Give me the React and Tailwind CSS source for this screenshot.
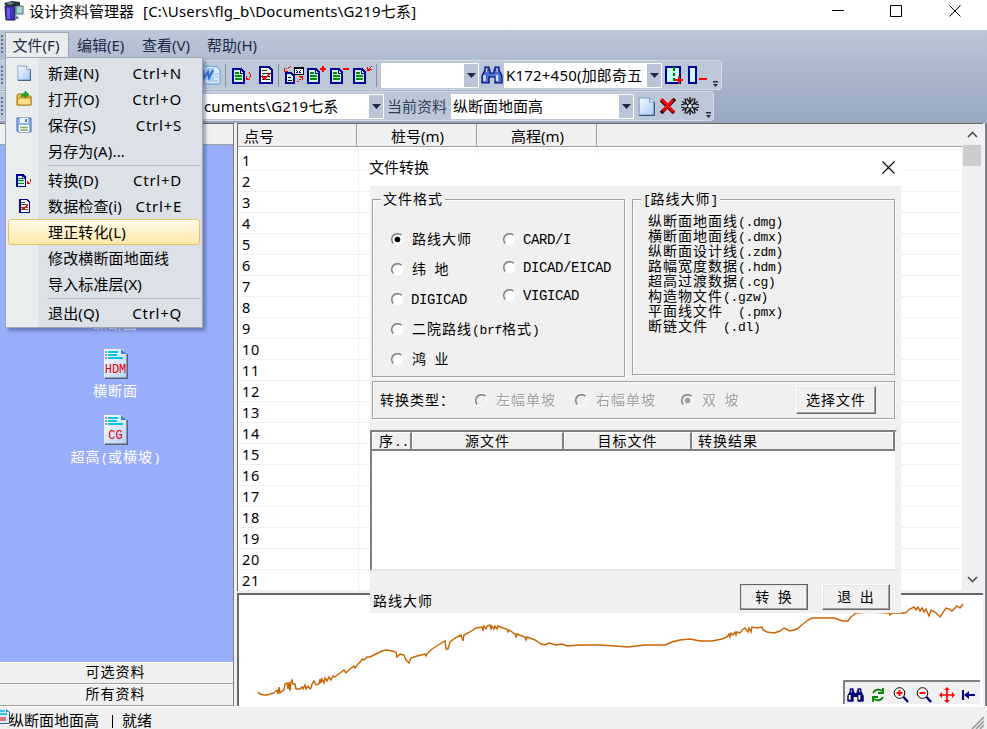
import React from "react";
import clsx from "clsx";

const UI = "font-['Noto_Sans','Noto_Sans_CJK_SC',sans-serif]";

const menuItems = [
    { label: "新建(N)", keys: "Ctrl+N", icon: "new" },
    { label: "打开(O)", keys: "Ctrl+O", icon: "open" },
    { label: "保存(S)", keys: "Ctrl+S", icon: "save" },
    { label: "另存为(A)..." },
    { divider: true },
    { label: "转换(D)", keys: "Ctrl+D", icon: "convert" },
    { label: "数据检查(i)", keys: "Ctrl+E", icon: "check" },
    { label: "理正转化(L)", active: true },
    { label: "修改横断面地面线" },
    { label: "导入标准层(X)" },
    { divider: true },
    { label: "退出(Q)", keys: "Ctrl+Q" },
];

const fileTypes = [
    "纵断面地面线(.dmg)",
    "横断面地面线(.dmx)",
    "纵断面设计线(.zdm)",
    "路幅宽度数据(.hdm)",
    "超高过渡数据(.cg)",
    "构造物文件(.gzw)",
    "平面线文件  (.pmx)",
    "断链文件  (.dl)",
];

const profile =
    "258,692 260,694 264,695 267,695 274,693 277,690 278,694 279,687 280,693 282,691 284,690 285,684 287,683 288,689 289,682 290,691 291,682 292,680 293,684 295,684 296,689 300,689 302,687 303,689 305,685 306,689 308,686 310,689 311,688 312,684 314,681 316,685 319,684 320,679 321,683 322,679 324,683 325,678 327,681 329,677 331,680 333,676 335,677 340,673 344,670 346,673 350,669 354,666 355,668 358,664 361,661 362,659 364,660 367,657 370,657 378,653 382,651 386,650 392,651 396,652 397,657 400,654 404,655 406,660 409,663 411,658 417,656 425,654 426,656 427,654 432,649 440,644 445,641 446,649 448,649 450,642 455,638 461,635 463,641 464,635 470,632 476,628 482,627 483,630 484,626 486,629 487,626 490,625 491,629 492,626 494,629 495,626 497,629 498,626 503,628 507,629 508,632 509,630 515,634 516,637 517,634 525,637 526,640 527,637 535,640 541,644 545,645 549,643 556,645 562,644 567,646 580,645 600,645 615,646 628,647 644,645 665,645 672,642 680,640 690,639 700,641 712,641 722,639 727,637 729,634 730,637 731,633 733,635 735,632 736,635 737,632 740,633 742,630 745,628 748,632 749,628 751,632 752,627 757,628 762,627 763,630 767,632 774,633 780,631 784,628 790,631 797,629 803,624 808,620 812,618 834,618 843,621 848,621 851,617 856,613 870,612 889,613 890,615 892,613 905,613 910,609 914,607 916,610 918,607 920,611 922,608 924,612 926,609 929,616 931,610 935,612 940,617 946,608 949,609 952,611 957,606 960,608 963,604";

// Page with a folded corner, used by New and by the toolbar
function PageIcon({ className }) {
    return (
        <svg className={className} viewBox="0 0 16 18">
            <defs>
                <linearGradient id="page" x1="0" y1="0" x2="1" y2="1">
                    <stop offset="0" stopColor="#f8fcff" />
                    <stop offset="1" stopColor="#a9c8f4" />
                </linearGradient>
            </defs>
            <path d="M1 1h10l4 4v12H1z" fill="url(#page)" stroke="#7d9bcb" />
            <path d="M11 1v4h4" fill="#eaf3ff" stroke="#7d9bcb" />
            <path d="M15.5 5v12.5H1" fill="none" stroke="#33527f" />
        </svg>
    );
}

// Small navy document with an optional red mark beside it
function DocIcon({ mark, className = "w-5 h-5" }) {
    return (
        <svg className={className} viewBox="0 0 20 20" shapeRendering="crispEdges">
            {mark !== "swap" && (
                <>
                    <path d="M1 4h8l3 3v11H1z" fill="#d4f6f0" stroke="#000094" strokeWidth="2" />
                    <path d="M8 4v4h4" fill="none" stroke="#000094" />
                    <path d="M3 8h4M3 11h7M3 14h7" stroke="#009000" strokeWidth="1.600" />
                </>
            )}
            {mark === "plus" && <path d="M15 1h2v6h-2zM13 3h6v2h-6z" fill="#f00" />}
            {mark === "minus" && <path d="M13 3h6v2h-6z" fill="#f00" />}
            {mark === "arrow" && <path d="M17 7h1v2h1v3h-1v1h-1v-1h1V9h-1zM14 11h1v2h1v1h2v1h-4z" fill="#f00" />}
            {mark === "up" && <path d="M18 1h1v1h-1zM17 2h1v1h-1zM16 3h1v1h2v1h-2v1h-3V2h1v2h1z" fill="#f00" />}
            {mark === "swap" && (
                <>
                    <path d="M10 2h9v7h-9z" fill="#fff" stroke="#000" />
                    <path d="M10 2h9v2h-9z" fill="#000" />
                    <path d="M12 5l2 2-2 1M17 5l-2 2 2 1" stroke="#0000a0" fill="none" />
                    <path d="M2 8h5l3 3v7H2z" fill="#d4f6f0" stroke="#000094" strokeWidth="2" />
                    <path d="M4 12h3M4 15h4" stroke="#000" />
                    <path d="M0 3h1v3h3v1H0zM2 3h1v1H2zM4 2h2v1H4zM6 1h1v1H6z" fill="#f00" />
                    <path d="M15 11h4v4h-1v-2h-2v-1h-1zM15 14h2v1h-2zM13 16h2v1h-2z" fill="#f00" />
                </>
            )}
        </svg>
    );
}

function CheckDocIcon({ className = "w-4 h-5" }) {
    return (
        <svg className={className} viewBox="0 0 16 20" shapeRendering="crispEdges">
            <path d="M2 2h9l3 3v13H2z" fill="#fff" stroke="#000094" strokeWidth="2" />
            <path d="M4 5.5h5M4 8.5h8M4 11.5h8M4 14.5h8" stroke="#222" />
            <path d="M4 11l3 3 5-6" fill="none" stroke="#f00" strokeWidth="1.600" />
        </svg>
    );
}

function FolderIcon() {
    return (
        <svg className="w-4 h-4" viewBox="0 0 16 16">
            <path d="M1 5l1-2h4l1 2h8v9H1z" fill="#f4c14d" stroke="#a97412" />
            <path d="M1 14l1-7h13v7z" fill="#ffdf86" stroke="#b07e1c" />
            <path d="M5 6c0-3 2-4 4-4V0l4 3.5L9 7V5C7 5 6 5 5 6z" fill="#2fa52f" stroke="#0c7a12" strokeWidth=".6" />
        </svg>
    );
}

function SaveIcon() {
    return (
        <svg className="w-4 h-4" viewBox="0 0 16 16">
            <path d="M1 1h14v14H2l-1-1z" fill="#8fb6e8" stroke="#3f6fb0" />
            <path d="M4 1h8v5H4z" fill="#f2f7ff" />
            <path d="M9 2h2v3H9z" fill="#4a78b8" />
            <path d="M3 8h10v7H3z" fill="#fff" />
            <path d="M4 10.5h8M4 13h8" stroke="#7fb060" strokeWidth="1.5" />
        </svg>
    );
}

function Binoculars({ className, body = "#4a72d8", lens = "#cfe0ff" }) {
    return (
        <svg className={className} viewBox="0 0 22 20">
            <path
                d="M4 2h4v3h1v3h4V5h1V2h4v3l3 6v7h-7v-6H8v6H1v-7l3-6z"
                fill={body}
                stroke="#00006c"
                strokeWidth="1.2"
            />
            <path d="M3.500 10v6M16 10v6" stroke={lens} strokeWidth="2.500" />
            <path d="M5.5 3v4M16 3v4" stroke={lens} />
        </svg>
    );
}

function WordIcon() {
    return (
        <svg className="w-5 h-5" viewBox="0 0 20 20">
            <path d="M1 2q9-2 15 0l3 3v14H4z" fill="#d6e8fa" stroke="#5c9bdc" />
            <path d="M0 3h13v12H0z" fill="#a9cdf2" />
            <path d="M2 5l1 8 4-6 1 6 4-8" fill="none" stroke="#2f6fc2" strokeWidth="2" />
            <path d="M14 9h3M14 12h3M8 16h9" stroke="#8ab8e6" />
        </svg>
    );
}

function Snowflake() {
    return (
        <svg className="w-5 h-5" viewBox="0 0 20 20">
            <g stroke="#111" strokeWidth="1.3" fill="none">
                <path d="M10 1v18M2 5.5l16 9M18 5.5l-16 9" />
                <path d="M6.500 2.500l3.500 4 3.500-4M6.500 17.500l3.500-4 3.500 4M1 9l5-1.500-1-5M19 9l-5-1.500 1-5M1 11l5 1.500-1 5M19 11l-5 1.500 1 5" />
            </g>
            <circle cx="10" cy="10" r="2.4" fill="#dff" stroke="#111" />
        </svg>
    );
}

function SectionIcon({ text }) {
    return (
        <svg className="w-6 h-8" viewBox="0 0 24 32">
            <defs>
                <linearGradient id="sheet" x1="0" y1="0" x2="1" y2="1">
                    <stop offset="0" stopColor="#fff" />
                    <stop offset="1" stopColor="#b4d0f6" />
                </linearGradient>
            </defs>
            <path d="M0 1h18l5 5v24H0z" fill="url(#sheet)" />
            <path d="M23.200 6v24.200H1" fill="none" stroke="#55606e" strokeWidth="1.500" />
            <path d="M17 1v5h6z" fill="#3d86c8" />
            <path d="M4 4h10M4 7h9M4 10h15" stroke="#00c4e8" strokeWidth="2" />
            <path d="M2 3v8" stroke="#1442a8" strokeDasharray="2 1" />
            <text x="11.500" y="25" fontSize="12" textAnchor="middle" fill="#e00000" fontFamily="Liberation Mono, monospace">
                {text}
            </text>
        </svg>
    );
}

function AppIcon() {
    return (
        <svg className="w-[21px] h-[21px]" viewBox="0 0 21 21">
            <path d="M1 6h10v14H2z" fill="#3f35b8" stroke="#20184f" />
            <path d="M3 8h3v11H3z" fill="#665be0" />
            <path d="M0 3l8-2 8 1v5l-5-1H2z" fill="#263238" />
            <path d="M2 3l5-1 3 1-4 2z" fill="#6f8fa0" />
            <path d="M12 6h7v8h-7z" fill="#a9d6d4" stroke="#3d6d6e" />
            <path d="M13 15l2 4h-4z" fill="#4d8d8a" />
        </svg>
    );
}

const menuIcons = {
    new: <PageIcon className="w-3.5 h-4" />,
    open: <FolderIcon />,
    save: <SaveIcon />,
    convert: <DocIcon mark="arrow" className="w-4 h-4" />,
    check: <CheckDocIcon className="w-[13px] h-4" />,
};

// SimSun-like text: CJK glyphs in 15px cells, half-width glyphs on a fixed pitch
function Sim({ children, wide, className }) {
    return (
        <span
            className={clsx(
                "block whitespace-pre font-['Noto_Sans_CJK_SC',sans-serif] text-[14px] tracking-[1px] leading-[15px]",
                className
            )}
        >
            {children.split(/([ -~]+)/).map((part, i) =>
                i % 2 ? (
                    <span
                        key={i}
                        className={clsx(
                            "font-['Liberation_Mono',monospace] leading-[0]",
                            wide ? "text-[14px] tracking-[-0.4px]" : "text-[13px] tracking-[-0.3px]"
                        )}
                    >
                        {part}
                    </span>
                ) : (
                    part
                )
            )}
        </span>
    );
}

function Radio({ checked, disabled }) {
    return (
        <svg className="w-[13px] h-[13px] shrink-0 mt-px" viewBox="0 0 13 13">
            <circle cx="6.500" cy="6.500" r="5.500" fill={disabled ? "#f0f0f0" : "#fff"} stroke="#fff" />
            <path d="M2.300 10.500A5.800 5.800 0 0 1 10.500 2.300" fill="none" stroke="#808080" strokeWidth="1.500" />
            {checked && <circle cx="6.500" cy="6.500" r="2.800" fill={disabled ? "#a0a0a0" : "#000"} />}
        </svg>
    );
}

function Option({ label, checked, disabled, className }) {
    return (
        <label className={clsx("flex items-center gap-2", className)}>
            <Radio checked={checked} disabled={disabled} />
            <Sim
                wide={/^[A-Z]/.test(label)}
                className={clsx(
                    /^[A-Z]/.test(label) && "-ml-px",
                    disabled && "text-[#a0a0a0] [text-shadow:1px_1px_0_#fff]"
                )}
            >
                {label}
            </Sim>
        </label>
    );
}

function PushButton({ children, primary, className }) {
    return (
        <button
            className={clsx(
                "flex items-center justify-center pb-0.5 bg-[#f0f0f0] border border-t-white border-l-white border-r-[#696969] border-b-[#696969] shadow-[inset_-1px_-1px_0_#a0a0a0,inset_1px_1px_0_#e3e3e3]",
                primary && "outline outline-1 -outline-offset-1 outline-[#646464]",
                className
            )}
        >
            <Sim>{children}</Sim>
        </button>
    );
}

function Combo({ text, className }) {
    return (
        <div className={clsx("flex items-center bg-white h-[25px] shrink-0", className)}>
            <span className="flex-1 pl-[2px] overflow-hidden whitespace-nowrap text-black">{text}</span>
            <span className="w-[14px] h-[23px] mr-px bg-[#b9c5d7] flex items-center justify-center">
                <svg className="w-[9px] h-[5px]" viewBox="0 0 9 5">
                    <path d="M0 0h9L4.500 5z" fill="#1b2a45" />
                </svg>
            </span>
        </div>
    );
}

function Grip() {
    return <div className="w-0.5 h-[19px] ml-px shrink-0 bg-[repeating-linear-gradient(to_bottom,#66758f_0_2px,transparent_2px_4px)]" />;
}

function Sep() {
    return <div className="w-px h-[23px] bg-[#8592a9] shrink-0" />;
}

function Overflow() {
    return (
        <svg className="w-[7px] h-[7px] self-end mb-[1px] shrink-0" viewBox="0 0 7 7">
            <path d="M1 0h5v1.500H1z" fill="#1b2a45" />
            <path d="M1 3h5L3.500 6z" fill="#1b2a45" />
        </svg>
    );
}

function TitleBar() {
    return (
        <div className="h-[30px] bg-white flex items-start pl-1 shrink-0">
            <AppIcon />
            <span className="ml-1 text-[15px] leading-[23px] whitespace-pre text-black">
                设计资料管理器<span className="ml-[9px] tracking-[0.18px]">[C:\Users\flg_b\Documents\G219七系]</span>
            </span>
            <svg className="ml-auto mr-[25px] mt-[3px] w-[130px] h-[15px]" viewBox="0 0 130 15" fill="none" stroke="#000">
                <path d="M0 7.500h12M58.500 2.500h11v11h-11zM117.500 2.500l11 11M128.500 2.500l-11 11" />
            </svg>
        </div>
    );
}

function MenuBar() {
    return (
        <div className="h-[29px] flex items-end shrink-0 bg-gradient-to-b from-[#bdc7d9] to-[#afbbcf] text-[15px] text-[#1b2a45]">
            <div className="self-center">
                <Grip />
            </div>
            <div className="ml-0.5 w-[64px] h-[27px] border border-b-0 border-[#9ba7b7] bg-[#e9ecee] flex items-center justify-center leading-[24px] pb-0.5 pr-0.5">
                文件(F)
            </div>
            {["编辑(E)", "查看(V)", "帮助(H)"].map((m) => (
                <span key={m} className="h-[27px] leading-[26px] ml-2 mr-[9px] w-[48px] whitespace-nowrap">
                    {m}
                </span>
            ))}
        </div>
    );
}

function Toolbars() {
    return (
        <div className="h-[64px] shrink-0 bg-gradient-to-b from-[#afbbcf] to-[#98a7c1] text-[15px] flex flex-col">
            <div className="w-[722px] h-[30px] mt-px flex items-center rounded-r bg-[#bcc7d8] border border-l-0 border-[#d2dae6]">
                <Grip />
                <div className="ml-[198px] flex items-center">
                    <WordIcon />
                    <div className="ml-1 flex items-center gap-[6px]">
                        <Sep />
                        <DocIcon mark="arrow" />
                        <CheckDocIcon />
                    </div>
                    <div className="ml-1 flex items-center gap-[5px]">
                        <Sep />
                        <DocIcon mark="swap" />
                    </div>
                    <div className="ml-[3px] flex items-center gap-[3px]">
                        <DocIcon mark="plus" />
                        <DocIcon mark="minus" />
                        <DocIcon mark="up" />
                        <Sep />
                    </div>
                </div>
                <Combo className="ml-[4px] w-[98px]" />
                <Binoculars className="w-[22px] h-5 ml-0.5 shrink-0" />
                <Combo text="K172+450(加郎奇五" className="ml-px w-[158px] tracking-[0.2px]" />
                <svg className="w-[43px] h-5 ml-[3px] shrink-0" viewBox="0 0 43 20" shapeRendering="crispEdges">
                    <path d="M1 2h14v16H1zM24 2h7v16h-7z" fill="#c8fbf8" stroke="#000094" strokeWidth="2" />
                    <path d="M8 2h2v4H8zM8 8h2v3H8zM8 13h2v3H8z" fill="#008000" />
                    <path d="M31 1v17" stroke="#000094" strokeDasharray="2 2" />
                    <path d="M10 14h8v2h-8zM13 11h2v8h-2zM34 13h8v2h-8z" fill="#f00" />
                </svg>
                <div className="ml-[4px] self-stretch flex">
                    <Overflow />
                </div>
            </div>
            <div className="w-[714px] h-[30px] mt-px flex items-center rounded-r bg-[#bcc7d8] border border-l-0 border-[#d2dae6] text-[#33415a]">
                <Grip />
                {/* the first part of the path is scrolled out under the menu */}
                <div className="ml-[199px] w-[182px] h-[25px] shrink-0 flex">
                    <Combo text="cuments\G219七系" className="w-[182px] tracking-[0.1px]" />
                </div>
                <span className="ml-[3px] w-[64px] shrink-0 whitespace-nowrap">当前资料</span>
                <Combo text="纵断面地面高" className="w-[183px]" />
                <PageIcon className="w-[17px] h-[19px] ml-1 shrink-0" />
                <svg className="w-[18px] h-[18px] ml-[4px] shrink-0" viewBox="0 0 18 18">
                    <path d="M2 3l13 13M16 2L2 16" stroke="#200" strokeWidth="3.500" />
                    <path d="M2.500 2l12 13M14 3L4 14" stroke="#f00" strokeWidth="3" />
                </svg>
                <span className="ml-[3px] shrink-0">
                    <Snowflake />
                </span>
                <div className="ml-[5px] self-stretch flex">
                    <Overflow />
                </div>
            </div>
        </div>
    );
}

function FileMenu() {
    return (
        <div className="absolute left-[5px] top-[57px] w-[198px] h-[271px] border border-[#9ba7b7] bg-[linear-gradient(to_right,#e9edee_32px,#dce1e8_32px)] shadow-[3px_3px_3px_rgba(40,55,100,0.4)] pt-0.5 text-[15px] text-black">
            {menuItems.map((item, i) =>
                item.divider ? (
                    <div key={i} className="h-[3px] ml-[41px] mr-px flex items-center">
                        <div className="h-px w-full bg-[#b9c0cb]" />
                    </div>
                ) : (
                    <div
                        key={i}
                        className={clsx(
                            "h-[26px] ml-0.5 mr-0.5 flex items-center rounded-[3px] border",
                            item.active
                                ? "border-[#e5c365] bg-gradient-to-b from-[#fffaea] to-[#ffe8a8]"
                                : "border-transparent"
                        )}
                    >
                        <span className="w-[30px] flex justify-center">{menuIcons[item.icon]}</span>
                        <span className="ml-[9px] whitespace-nowrap tracking-[0.15px]">{item.label}</span>
                        <span className="ml-auto mr-[17px] tracking-[0.75px]">{item.keys}</span>
                    </div>
                )
            )}
        </div>
    );
}

function Sidebar() {
    return (
        <div className="w-[234px] shrink-0 flex flex-col border-t border-r border-[#808080] border-t-[#696969] bg-[#99aefa]">
            <div className="h-[21px] bg-[#f0f0f0] border-b border-[#a0a0a0]" />
            <div className="flex-1 flex flex-col items-center pt-[171px] pr-[2px] text-white">
                <Sim>纵断面</Sim>
                <div className="mt-[17px]">
                    <SectionIcon text="HDM" />
                </div>
                <Sim className="mt-[3px]">横断面</Sim>
                <div className="mt-[16px]">
                    <SectionIcon text="CG" />
                </div>
                <Sim className="mt-[3px]">超高(或横坡)</Sim>
            </div>
            {["可选资料", "所有资料"].map((t) => (
                <div
                    key={t}
                    className="h-[22px] bg-[#f0f0f0] border-t border-b border-t-white border-b-[#a0a0a0] flex items-center justify-center pr-[2px] pb-1"
                >
                    <Sim>{t}</Sim>
                </div>
            ))}
        </div>
    );
}

function PointTable() {
    return (
        <div className="h-[468px] flex border-t border-l border-[#696969] bg-white">
            <div className="w-[724px] flex flex-col overflow-hidden">
                <div className="h-[23px] shrink-0 flex bg-[#f0f0f0] border-b border-[#a0a0a0] text-[15px] leading-[24px]">
                    <div className="w-[119px] pl-[6px] border-r border-[#a0a0a0]">点号</div>
                    <div className="w-[120px] pl-0.5 text-center border-r border-[#a0a0a0]">桩号(m)</div>
                    <div className="w-[120px] pl-0.5 text-center border-r border-[#a0a0a0]">高程(m)</div>
                </div>
                <div className="h-[3px] shrink-0 flex border-b border-[#f0f0f0]">
                    <div className="w-[121px] border-r border-[#f0f0f0]" />
                    <div className="w-[120px] border-r border-[#f0f0f0]" />
                    <div className="w-[120px] border-r border-[#f0f0f0]" />
                </div>
                {Array.from({ length: 21 }, (_, i) => (
                    <div
                        key={i}
                        className="h-[21px] shrink-0 flex border-b border-[#f0f0f0] text-[14.5px] leading-[20px] tracking-[0.6px]"
                    >
                        <div className="w-[121px] pl-1 border-r border-[#f0f0f0]">{i + 1}</div>
                        <div className="w-[120px] border-r border-[#f0f0f0]" />
                        <div className="w-[120px] border-r border-[#f0f0f0]" />
                    </div>
                ))}
            </div>
            <div className="w-[21px] bg-[#f0f0f0] flex flex-col items-center justify-between pt-[7px] pb-[8px] pr-px">
                <div className="flex flex-col items-center gap-[7px] w-full">
                    <svg className="w-[11px] h-[7px]" viewBox="0 0 11 7">
                        <path d="M1 6l4.500-4.500L10 6" fill="none" stroke="#505050" strokeWidth="1.700" />
                    </svg>
                    <div className="w-[18px] h-[21px] bg-[#cdcdcd]" />
                </div>
                <svg className="w-[11px] h-[7px]" viewBox="0 0 11 7">
                    <path d="M1 1l4.500 4.500L10 1" fill="none" stroke="#505050" strokeWidth="1.700" />
                </svg>
            </div>
        </div>
    );
}

function ChartTools() {
    return (
        <div className="absolute right-[3px] bottom-[2px] w-[137px] h-[24px] bg-[#f0f0f0] border-t-2 border-l-2 border-[#808080] flex items-center pl-[2px] pt-1 gap-[5px]">
            <Binoculars className="w-[17px] h-[16px]" body="#000080" lens="#ffffb0" />
            <svg className="w-[18px] h-[16px]" viewBox="0 0 18 16" fill="none" stroke="#008000" strokeWidth="1.800">
                <path d="M4 6c2-4 6-4 9-2M14 1v5H9M14 10c-2 4-6 4-9 2M4 15v-5h5" />
            </svg>
            {["in", "out"].map((z) => (
                <svg key={z} className="w-[18px] h-[16px]" viewBox="0 0 18 16">
                    <circle cx="7.500" cy="6" r="5.300" fill="#fff" stroke="#000" />
                    <path d={z === "in" ? "M4.500 6h6M7.500 3v6" : "M4.500 6h6"} stroke="#f00" strokeWidth="2" />
                    <path d="M11.500 10l4.500 5" stroke="#000080" strokeWidth="2.500" />
                </svg>
            ))}
            <svg className="w-[18px] h-[16px]" viewBox="0 0 18 16">
                <path d="M9 1v14M2 8h14" stroke="#f00" strokeWidth="1.700" />
                <path d="M9 0l3 3H6zM9 16l3-3H6zM1 8l3-3v6zM17 8l-3-3v6z" fill="#f00" />
            </svg>
            <svg className="w-[15px] h-[16px]" viewBox="0 0 15 16">
                <path d="M2 3v10M6 8h8" stroke="#000080" strokeWidth="2" />
                <path d="M3 8l5-4v8z" fill="#000080" />
            </svg>
        </div>
    );
}

function ProfileChart() {
    return (
        <div className="relative flex-1 bg-white border-t-2 border-l-2 border-[#696969]">
            <svg className="block w-[744px] h-[111px]" viewBox="239 595 744 111">
                <polyline points={profile} fill="none" stroke="#c86400" strokeWidth="1.400" />
            </svg>
            <ChartTools />
        </div>
    );
}

function Group({ title, className, children }) {
    return (
        <div
            role="group"
            className={clsx("relative border border-[#a0a0a0] shadow-[1px_1px_0_#fff,inset_1px_1px_0_#fff]", className)}
        >
            {title && (
                <span className="absolute left-[8px] -top-[11px] bg-[#f0f0f0] px-[2px] h-[18px] flex items-center">
                    <Sim>{title}</Sim>
                </span>
            )}
            {children}
        </div>
    );
}

function ConvertDialog() {
    return (
        <div className="absolute left-[370px] top-[153px] w-[531px] h-[460px] bg-[#f0f0f0] flex flex-col text-black">
            <div className="h-[33px] bg-white flex items-center justify-between pr-[6px] text-[15px] leading-[28px] shrink-0">
                <span className="-mt-[5px] -ml-px">文件转换</span>
                <svg className="w-[13px] h-[13px] -mt-[5px]" viewBox="0 0 13 13">
                    <path d="M.5.500l12 12M12.500.500l-12 12" stroke="#000" strokeWidth="1.100" />
                </svg>
            </div>
            <div className="flex items-start pl-[2px] pt-[13px] gap-[7px]">
                <Group title="文件格式" className="w-[253px] h-[178px]">
                    <div className="flex pl-[18px] pt-[31px]">
                        <div className="w-[112px] flex flex-col gap-[15px] whitespace-nowrap">
                            <Option label="路线大师" checked />
                            <Option label="纬 地" />
                            <Option label="DIGICAD" />
                            <Option label="二院路线(brf格式)" />
                            <Option label="鸿 业" />
                        </div>
                        <div className="flex flex-col gap-[13px]">
                            <Option label="CARD/I" />
                            <Option label="DICAD/EICAD" />
                            <Option label="VIGICAD" />
                        </div>
                    </div>
                </Group>
                <Group title="[路线大师]" className="w-[263px] h-[176px]">
                    <div className="flex flex-col pl-[15px] pt-[13px]">
                        {fileTypes.map((t) => (
                            <Sim key={t}>{t}</Sim>
                        ))}
                    </div>
                </Group>
            </div>
            <Group className="ml-[2px] mt-1 w-[523px] h-[38px] shrink-0 flex items-center">
                <Sim className="ml-[7px] -mt-0.5">转换类型：</Sim>
                <Option label="左幅单坡" disabled className="ml-[20px] -mt-px" />
                <Option label="右幅单坡" disabled className="ml-[19px] -mt-px" />
                <Option label="双 坡" disabled checked className="ml-[25px] -mt-px" />
                <PushButton className="ml-auto mr-[18px] w-[80px] h-[28px]">选择文件</PushButton>
            </Group>
            <div className="mt-[11px] w-[527px] h-[141px] shrink-0 bg-white border-2 border-t-[#808080] border-l-[#808080] border-r-[#f0f0f0] border-b-[#e3e3e3]">
                <div className="flex h-[19px] bg-[#f0f0f0] border-b-2 border-r-2 border-[#808080] [&>div]:flex [&>div]:items-center [&>div]:pb-px [&>div]:border-l [&>div]:border-t [&>div]:border-l-white [&>div]:border-t-white">
                    <div className="w-[40px] pl-[6px] border-r-2 border-r-[#808080]">
                        <Sim>序..</Sim>
                    </div>
                    <div className="w-[152px] justify-center border-r-2 border-r-[#808080]">
                        <Sim>源文件</Sim>
                    </div>
                    <div className="w-[128px] justify-center border-r-2 border-r-[#808080]">
                        <Sim>目标文件</Sim>
                    </div>
                    <div className="flex-1 pl-[5px]">
                        <Sim>转换结果</Sim>
                    </div>
                </div>
            </div>
            <div className="flex pl-[3px] pt-[13px]">
                <Sim className="mt-[9px]">路线大师</Sim>
                <PushButton primary className="ml-auto w-[68px] h-[26px]">
                    转 换
                </PushButton>
                <PushButton className="ml-[14px] mr-[11px] w-[68px] h-[26px]">退 出</PushButton>
            </div>
        </div>
    );
}

function StatusBar() {
    return (
        <div className="h-[23px] shrink-0 bg-[#f0f0f0] border-t border-white flex items-center text-[15px] text-black">
            <svg className="w-[10px] h-[16px] -mt-1" viewBox="0 0 10 16">
                <path d="M0 1h6l4 3v11H0z" fill="#d8eafc" />
                <path d="M9.500 4v11.500H0" stroke="#44607e" fill="none" />
                <path d="M6 1v3h4z" fill="#3d86c8" />
                <path d="M0 3h5M0 6h7" stroke="#00b8dc" strokeWidth="1.500" />
                <path d="M1 9v4M3 9v4M5 9v4" stroke="#e00000" />
            </svg>
            <span className="leading-[26px] pt-1 -ml-px">纵断面地面高</span>
            <span className="ml-[13px] w-px h-[13px] mt-1.5 bg-black" />
            <span className="ml-[9px] leading-[26px] pt-1">就绪</span>
            <svg className="ml-auto mr-[3px] self-end w-[13px] h-[13px]" viewBox="0 0 13 13">
                <path d="M1 13L13 1M5 13l8-8M9 13l4-4" stroke="#9a9a9a" strokeWidth="1.600" />
            </svg>
        </div>
    );
}

function App() {
    return (
        <div className={clsx("relative w-[987px] h-[729px] overflow-hidden flex flex-col bg-[#f0f0f0]", UI)}>
            <TitleBar />
            <MenuBar />
            <Toolbars />
            <div className="flex-1 min-h-0 flex">
                <Sidebar />
                <div className="ml-[3px] w-[746px] flex flex-col">
                    <PointTable />
                    <div className="h-[2px]" />
                    <ProfileChart />
                </div>
                <div className="ml-auto w-0.5 bg-[#808488]" />
            </div>
            <StatusBar />
            <FileMenu />
            <ConvertDialog />
        </div>
    );
}

export default App;
